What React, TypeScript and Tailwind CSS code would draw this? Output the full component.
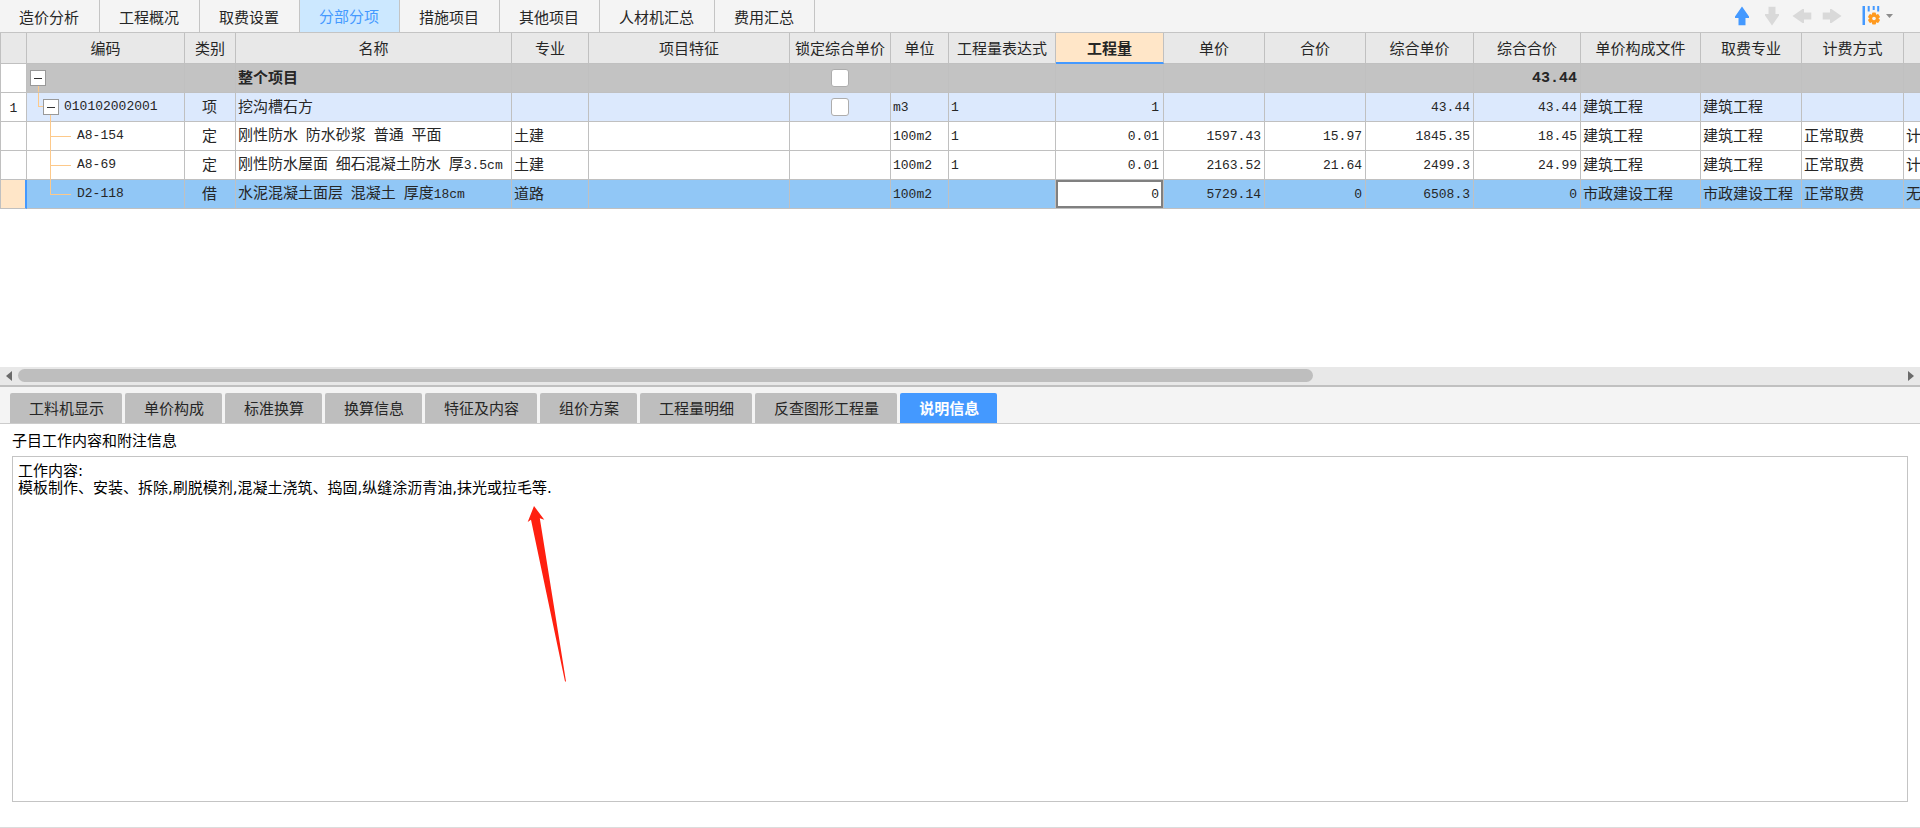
import { useState } from 'react';
import type { ReactNode } from 'react';
import clsx from 'clsx';

const mainTabs = ['造价分析', '工程概况', '取费设置', '分部分项', '措施项目', '其他项目', '人材机汇总', '费用汇总'];

const detailTabs = [
  '工料机显示',
  '单价构成',
  '标准换算',
  '换算信息',
  '特征及内容',
  '组价方案',
  '工程量明细',
  '反查图形工程量',
  '说明信息',
];

type Column = { key: string; label: string; width: string; align?: string };

const columns: Column[] = [
  { key: 'code', label: '编码', width: 'w-[158px]' },
  { key: 'kind', label: '类别', width: 'w-[51px]', align: 'text-center' },
  { key: 'name', label: '名称', width: 'w-[276px]' },
  { key: 'major', label: '专业', width: 'w-[77px]' },
  { key: 'feature', label: '项目特征', width: 'w-[201px]' },
  { key: 'lock', label: '锁定综合单价', width: 'w-[101px]', align: 'text-center' },
  { key: 'unit', label: '单位', width: 'w-[58px]' },
  { key: 'expr', label: '工程量表达式', width: 'w-[107px]' },
  { key: 'qty', label: '工程量', width: 'w-[108px]', align: 'text-right' },
  { key: 'price', label: '单价', width: 'w-[101px]', align: 'text-right' },
  { key: 'total', label: '合价', width: 'w-[101px]', align: 'text-right' },
  { key: 'compPrice', label: '综合单价', width: 'w-[108px]', align: 'text-right' },
  { key: 'compTotal', label: '综合合价', width: 'w-[107px]', align: 'text-right' },
  { key: 'file', label: '单价构成文件', width: 'w-[120px]' },
  { key: 'feeMajor', label: '取费专业', width: 'w-[101px]' },
  { key: 'feeMode', label: '计费方式', width: 'w-[102px]' },
  { key: 'extra', label: '', width: 'w-[110px]' },
];

type Row = { index?: string; level: number; className: string; cells: Record<string, string> };

const rows: Row[] = [
  {
    level: 0,
    className: 'bg-[#c3c3c3] font-bold',
    cells: { name: '整个项目', lock: 'box', compTotal: '43.44' },
  },
  {
    index: '1',
    level: 1,
    className: 'bg-[#dce9fd]',
    cells: {
      code: '010102002001', kind: '项', name: '挖沟槽石方', lock: 'box', unit: 'm3', expr: '1', qty: '1',
      compPrice: '43.44', compTotal: '43.44', file: '建筑工程', feeMajor: '建筑工程',
    },
  },
  {
    level: 2,
    className: 'bg-white',
    cells: {
      code: 'A8-154', kind: '定', name: '刚性防水 防水砂浆 普通 平面', major: '土建', unit: '100m2', expr: '1', qty: '0.01',
      price: '1597.43', total: '15.97', compPrice: '1845.35', compTotal: '18.45',
      file: '建筑工程', feeMajor: '建筑工程', feeMode: '正常取费', extra: '计',
    },
  },
  {
    level: 2,
    className: 'bg-white',
    cells: {
      code: 'A8-69', kind: '定', name: '刚性防水屋面 细石混凝土防水 厚3.5cm', major: '土建', unit: '100m2', expr: '1', qty: '0.01',
      price: '2163.52', total: '21.64', compPrice: '2499.3', compTotal: '24.99',
      file: '建筑工程', feeMajor: '建筑工程', feeMode: '正常取费', extra: '计',
    },
  },
  {
    level: 2,
    className: 'bg-[#91c7f6]',
    cells: {
      code: 'D2-118', kind: '借', name: '水泥混凝土面层 混凝土 厚度18cm', major: '道路', unit: '100m2', qty: '0',
      price: '5729.14', total: '0', compPrice: '6508.3', compTotal: '0',
      file: '市政建设工程', feeMajor: '市政建设工程', feeMode: '正常取费', extra: '无',
    },
  },
];

const note = '工作内容:\n模板制作、安装、拆除,刷脱模剂,混凝土浇筑、捣固,纵缝涂沥青油,抹光或拉毛等.';

// Latin runs are half as wide as a Chinese character
function Mixed({ text, bold }: { text: string; bold?: boolean }) {
  return (
    <>
      {text.split(/([\x20-\x7e]+)/).map((part, i) =>
        i % 2 === 1 ? (
          <span
            key={i}
            className={clsx("font-['Liberation_Mono',monospace] whitespace-pre", bold ? 'text-[15px]' : 'text-[13px]')}
          >
            {part}
          </span>
        ) : (
          part
        )
      )}
    </>
  );
}

function Toggle() {
  return (
    <button aria-label="折叠" className="flex size-4 shrink-0 items-center justify-center border border-[#999] bg-white">
      <span className="h-px w-2 bg-[#333]" />
    </button>
  );
}

function CodeCell({ row, last }: { row: Row; last: boolean }) {
  if (row.level === 0) {
    return (
      <div className="relative flex h-7 items-center pl-[3px]">
        <Toggle />
        <span className="absolute bottom-0 left-[11px] h-1.5 w-px bg-[#fdc98a]" />
      </div>
    );
  }
  if (row.level === 1) {
    return (
      <div className="relative flex h-7 items-center gap-[5px] pl-4">
        <span className="absolute top-0 left-[11px] h-3.5 w-[5px] border-b border-l border-[#fdc98a]" />
        <Toggle />
        <span className="absolute bottom-0 left-[23px] h-1.5 w-px bg-[#fdc98a]" />
        <Mixed text={row.cells.code} />
      </div>
    );
  }
  return (
    <div className="relative flex h-7 items-center pl-[50px]">
      <span className={clsx('absolute -top-px left-[23px] w-px bg-[#fdc98a]', last ? 'h-[15px]' : 'h-[29px]')} />
      <span className="absolute top-3.5 left-[23px] h-px w-[21px] bg-[#fdc98a]" />
      <Mixed text={row.cells.code} />
    </div>
  );
}

function IconButton({ label, children }: { label: string; children: ReactNode }) {
  return (
    <button aria-label={label} className="flex size-5 items-center justify-center">
      {children}
    </button>
  );
}

function Arrow({ className }: { className: string }) {
  return (
    <svg viewBox="0 0 20 20" className={clsx('size-5', className)} fill="currentColor">
      <path d="M10 0.5 L17 10.5 V12 H13.5 V19.3 H6.5 V12 H3 V10.5 Z" />
    </svg>
  );
}

function SettingsIcon() {
  return (
    <svg viewBox="0 0 18 20" className="h-5 w-[18px]">
      <path d="M0.500 0h2.500v19H0.500z M5.700 0h2v5.500h-2z M10.700 0h2v4h-2z M15.200 0h2v5.500h-2z" fill="#4499ff" />
      <g fill="#ff9a1f">
        <circle cx="12" cy="12.500" r="4.600" />
        <rect x="10" y="6.500" width="4" height="12" rx="1" />
        <rect x="10" y="6.500" width="4" height="12" rx="1" transform="rotate(60 12 12.500)" />
        <rect x="10" y="6.500" width="4" height="12" rx="1" transform="rotate(120 12 12.500)" />
      </g>
      <circle cx="12" cy="12.500" r="1.800" fill="#f4f4f4" />
    </svg>
  );
}

function Cell({ row, column, last }: { row: Row; column: Column; last: boolean }) {
  const value = row.cells[column.key] ?? '';
  if (column.key === 'code') {
    return (
      <td className="border-r border-b border-[#c0c0c0] p-0">
        <CodeCell row={row} last={last} />
      </td>
    );
  }
  if (column.key === 'lock' && value) {
    return (
      <td className="border-r border-b border-[#c0c0c0] p-0">
        <input
          type="checkbox"
          aria-label="锁定综合单价"
          className="mx-auto block size-[18px] appearance-none rounded-[3px] border border-[#adadad] bg-white"
        />
      </td>
    );
  }
  if (column.key === 'qty' && last) {
    return (
      <td className="border-r border-b border-[#c0c0c0] p-0">
        <input
          aria-label="工程量"
          defaultValue={value}
          className="block h-7 w-full border-2 border-[#808080] bg-white pr-0.5 text-right font-['Liberation_Mono',monospace] text-[13px] outline-none"
        />
      </td>
    );
  }
  return (
    <td
      className={clsx(
        'overflow-hidden border-r border-b border-[#c0c0c0] pt-0 pb-0.5 pl-0.5 whitespace-nowrap',
        column.align,
        column.key === 'qty' ? 'pr-1' : 'pr-[3px]'
      )}
    >
      <Mixed text={value} bold={row.level === 0} />
    </td>
  );
}

export default function App() {
  const [mainTab, setMainTab] = useState('分部分项');
  const [detailTab, setDetailTab] = useState('说明信息');

  return (
    <div className="flex h-screen flex-col overflow-hidden bg-white font-['Noto_Sans_CJK_SC',sans-serif] text-[15px] leading-5 text-[#262626]">
      <section className="flex min-h-0 flex-[387] flex-col">
        {/* Top navigation */}
        <header className="flex h-[33px] shrink-0 items-stretch justify-between border-b border-[#c4c4c4] bg-[#f4f4f4]">
          <nav className="flex">
            {mainTabs.map((tab) => (
              <button
                key={tab}
                onClick={() => setMainTab(tab)}
                className={clsx(
                  'border-r border-[#c4c4c4] pr-5 pl-[19px] whitespace-nowrap',
                  tab === mainTab ? 'bg-[#cce8ff] text-[#4499ff]' : 'pt-0.5'
                )}
              >
                {tab}
              </button>
            ))}
          </nav>
          <div className="flex items-center gap-2.5 pr-[27px]">
            <IconButton label="上移"><Arrow className="text-[#4499ff]" /></IconButton>
            <IconButton label="下移"><Arrow className="rotate-180 text-[#d9d9d9]" /></IconButton>
            <IconButton label="左移"><Arrow className="-rotate-90 text-[#d9d9d9]" /></IconButton>
            <IconButton label="右移"><Arrow className="rotate-90 text-[#d9d9d9]" /></IconButton>
            <button aria-label="列设置" className="ml-2.5 flex items-center gap-1.5">
              <SettingsIcon />
              <svg viewBox="0 0 7 4" className="h-1 w-[7px]" fill="#8c8c8c">
                <path d="M0 0h7L3.500 4z" />
              </svg>
            </button>
          </div>
        </header>

        {/* Bill of quantities */}
        <div className="min-h-0 flex-1 overflow-hidden">
          <table className="w-[2014px] table-fixed border-separate border-spacing-0">
            <colgroup>
              <col className="w-[27px]" />
              {columns.map((column) => (
                <col key={column.key} className={column.width} />
              ))}
            </colgroup>
            <thead>
              <tr className="h-[31px] bg-[#e8e8e8]">
                <th aria-label="序号" className="border-r border-b border-l border-[#c0c0c0]" />
                {columns.map((column) => (
                  <th
                    key={column.key}
                    className={clsx(
                      'border-r border-b border-[#c0c0c0] p-0 text-center whitespace-nowrap',
                      column.key === 'qty'
                        ? 'border-b-2 border-b-[#4499ff] bg-[#ffe6c8] font-bold'
                        : 'font-normal'
                    )}
                  >
                    {column.label}
                  </th>
                ))}
              </tr>
            </thead>
            <tbody>
              {rows.map((row, i) => {
                const last = i === rows.length - 1;
                return (
                  <tr key={i} className={clsx('h-[29px]', row.className)}>
                    <td
                      className={clsx(
                        'border-b border-l border-[#c0c0c0] p-0 text-center',
                        last ? 'border-r-2 border-r-[#4499ff] bg-[#ffe6c8]' : 'border-r bg-white'
                      )}
                    >
                      <Mixed text={row.index ?? ''} />
                    </td>
                    {columns.map((column) => (
                      <Cell key={column.key} row={row} column={column} last={last} />
                    ))}
                  </tr>
                );
              })}
            </tbody>
          </table>
        </div>

        {/* Horizontal scroll bar */}
        <div className="flex h-5 shrink-0 items-center gap-1.5 border-b-2 border-[#c0c0c0] bg-[#e8e8e8] px-1.5">
          <svg viewBox="0 0 6 10" className="h-2.5 w-1.5 shrink-0" fill="#6b6b6b">
            <path d="M6 0v10L0 5z" />
          </svg>
          <div className="flex-1">
            <div className="h-[13px] w-11/16 rounded-full bg-[#bebebe]" />
          </div>
          <svg viewBox="0 0 6 10" className="h-2.5 w-1.5 shrink-0" fill="#6b6b6b">
            <path d="M0 0v10l6-5z" />
          </svg>
        </div>
      </section>

      <section className="flex min-h-0 flex-[441] flex-col border-b border-[#dcdcdc]">
        <nav className="flex h-[37px] shrink-0 items-end gap-[3px] border-b border-[#cccccc] bg-[#f4f4f4] pl-2.5">
          {detailTabs.map((tab) => (
            <button
              key={tab}
              onClick={() => setDetailTab(tab)}
              className={clsx(
                'h-[30px] rounded-t-[2px] pr-[18px] pl-[19px] whitespace-nowrap',
                tab === detailTab ? 'bg-[#4499ff] font-bold text-white' : 'bg-[#bebebe]'
              )}
            >
              {tab}
            </button>
          ))}
        </nav>
        <div className="relative flex min-h-0 flex-1 flex-col px-3 pt-1.5 pb-[25px] text-black">
          <label htmlFor="note">子目工作内容和附注信息</label>
          <textarea
            id="note"
            readOnly
            defaultValue={note}
            className="mt-1.5 w-full flex-1 resize-none border border-[#c4c4c4] bg-white px-[5px] pt-1.5 pb-1 font-['DejaVu_Sans','Noto_Sans_CJK_SC',sans-serif] leading-[17px] outline-none"
          />
          {/* Red pointer over the note */}
          <svg viewBox="0 0 40 178" className="pointer-events-none absolute top-[81px] left-[527px] h-[178px] w-10" fill="#ff2010">
            <path d="M7 1 L17.300 14.700 L12.800 13.300 L39 176.500 L38 176.500 L4 14.700 L0.700 17 Z" />
          </svg>
        </div>
      </section>
    </div>
  );
}
